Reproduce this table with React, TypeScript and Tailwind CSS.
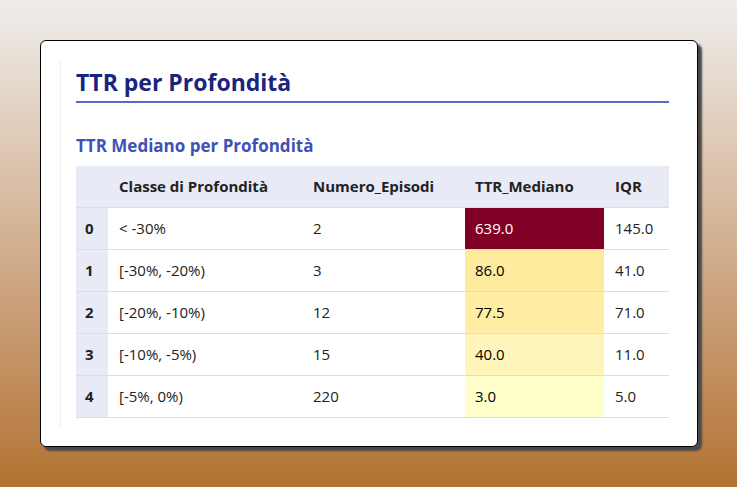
import React from "react";

const rows = [
  { i: "0", c: "< -30%", n: "2", t: "639.0", q: "145.0", bg: "bg-[#800026]", tc: "text-white" },
  { i: "1", c: "[-30%, -20%)", n: "3", t: "86.0", q: "41.0", bg: "bg-[#feeb9d]", tc: "text-black" },
  { i: "2", c: "[-20%, -10%)", n: "12", t: "77.5", q: "71.0", bg: "bg-[#feeda2]", tc: "text-black" },
  { i: "3", c: "[-10%, -5%)", n: "15", t: "40.0", q: "11.0", bg: "bg-[#fff4b9]", tc: "text-black" },
  { i: "4", c: "[-5%, 0%)", n: "220", t: "3.0", q: "5.0", bg: "bg-[#ffffcc]", tc: "text-black" },
];

export default function App() {
  return (
    <div
      className="w-[737px] h-[487px] bg-gradient-to-b from-[#efeeec] to-[#b2722f] pt-[40px] pl-[40px]"
      style={{ fontFamily: '"Open Sans", "Noto Sans", sans-serif' }}
    >
      <div className="w-[658px] h-[407px] bg-white border border-black rounded-[6px] shadow-[4px_4px_2px_#4a4a4a] pt-[19px] pl-[19px]">
        <div className="w-[610px] h-[367px] border-l border-[#eeeeee] pl-[15px]">
          <h1 className="w-[593px] text-[23px] leading-[28px] font-bold text-[#1a237e] pt-[8px] pb-[5px] border-b-2 border-[#5c6bc0]">
            TTR per Profondità
          </h1>
          <h2 className="mt-[32px] text-[17px] leading-[22px] font-bold text-[#3f51b5]">
            TTR Mediano per Profondità
          </h2>
          <table className="mt-[9px] border-collapse text-[15px] text-[#222] table-fixed w-[593px]">
            <colgroup>
              <col className="w-[32px]" />
              <col className="w-[194px]" />
              <col className="w-[163px]" />
              <col className="w-[139px]" />
              <col className="w-[65px]" />
            </colgroup>
            <thead>
              <tr className="bg-[#e8eaf6] h-[41px] border-b border-[#dddddd]">
                <th className="px-[10px]"></th>
                <th className="px-[11px] text-left font-bold">Classe di Profondità</th>
                <th className="px-[11px] text-left font-bold">Numero_Episodi</th>
                <th className="px-[10px] text-left font-bold">TTR_Mediano</th>
                <th className="px-[11px] text-left font-bold">IQR</th>
              </tr>
            </thead>
            <tbody>
              {rows.map((r) => (
                <tr key={r.i} className="h-[42px] border-b border-[#dddddd]">
                  <td className="bg-[#e8eaf6] px-[9px] font-bold">{r.i}</td>
                  <td className="px-[11px]">{r.c}</td>
                  <td className="px-[11px]">{r.n}</td>
                  <td className={`px-[10px] ${r.bg} ${r.tc}`}>{r.t}</td>
                  <td className="px-[11px]">{r.q}</td>
                </tr>
              ))}
            </tbody>
          </table>
        </div>
      </div>
    </div>
  );
}
